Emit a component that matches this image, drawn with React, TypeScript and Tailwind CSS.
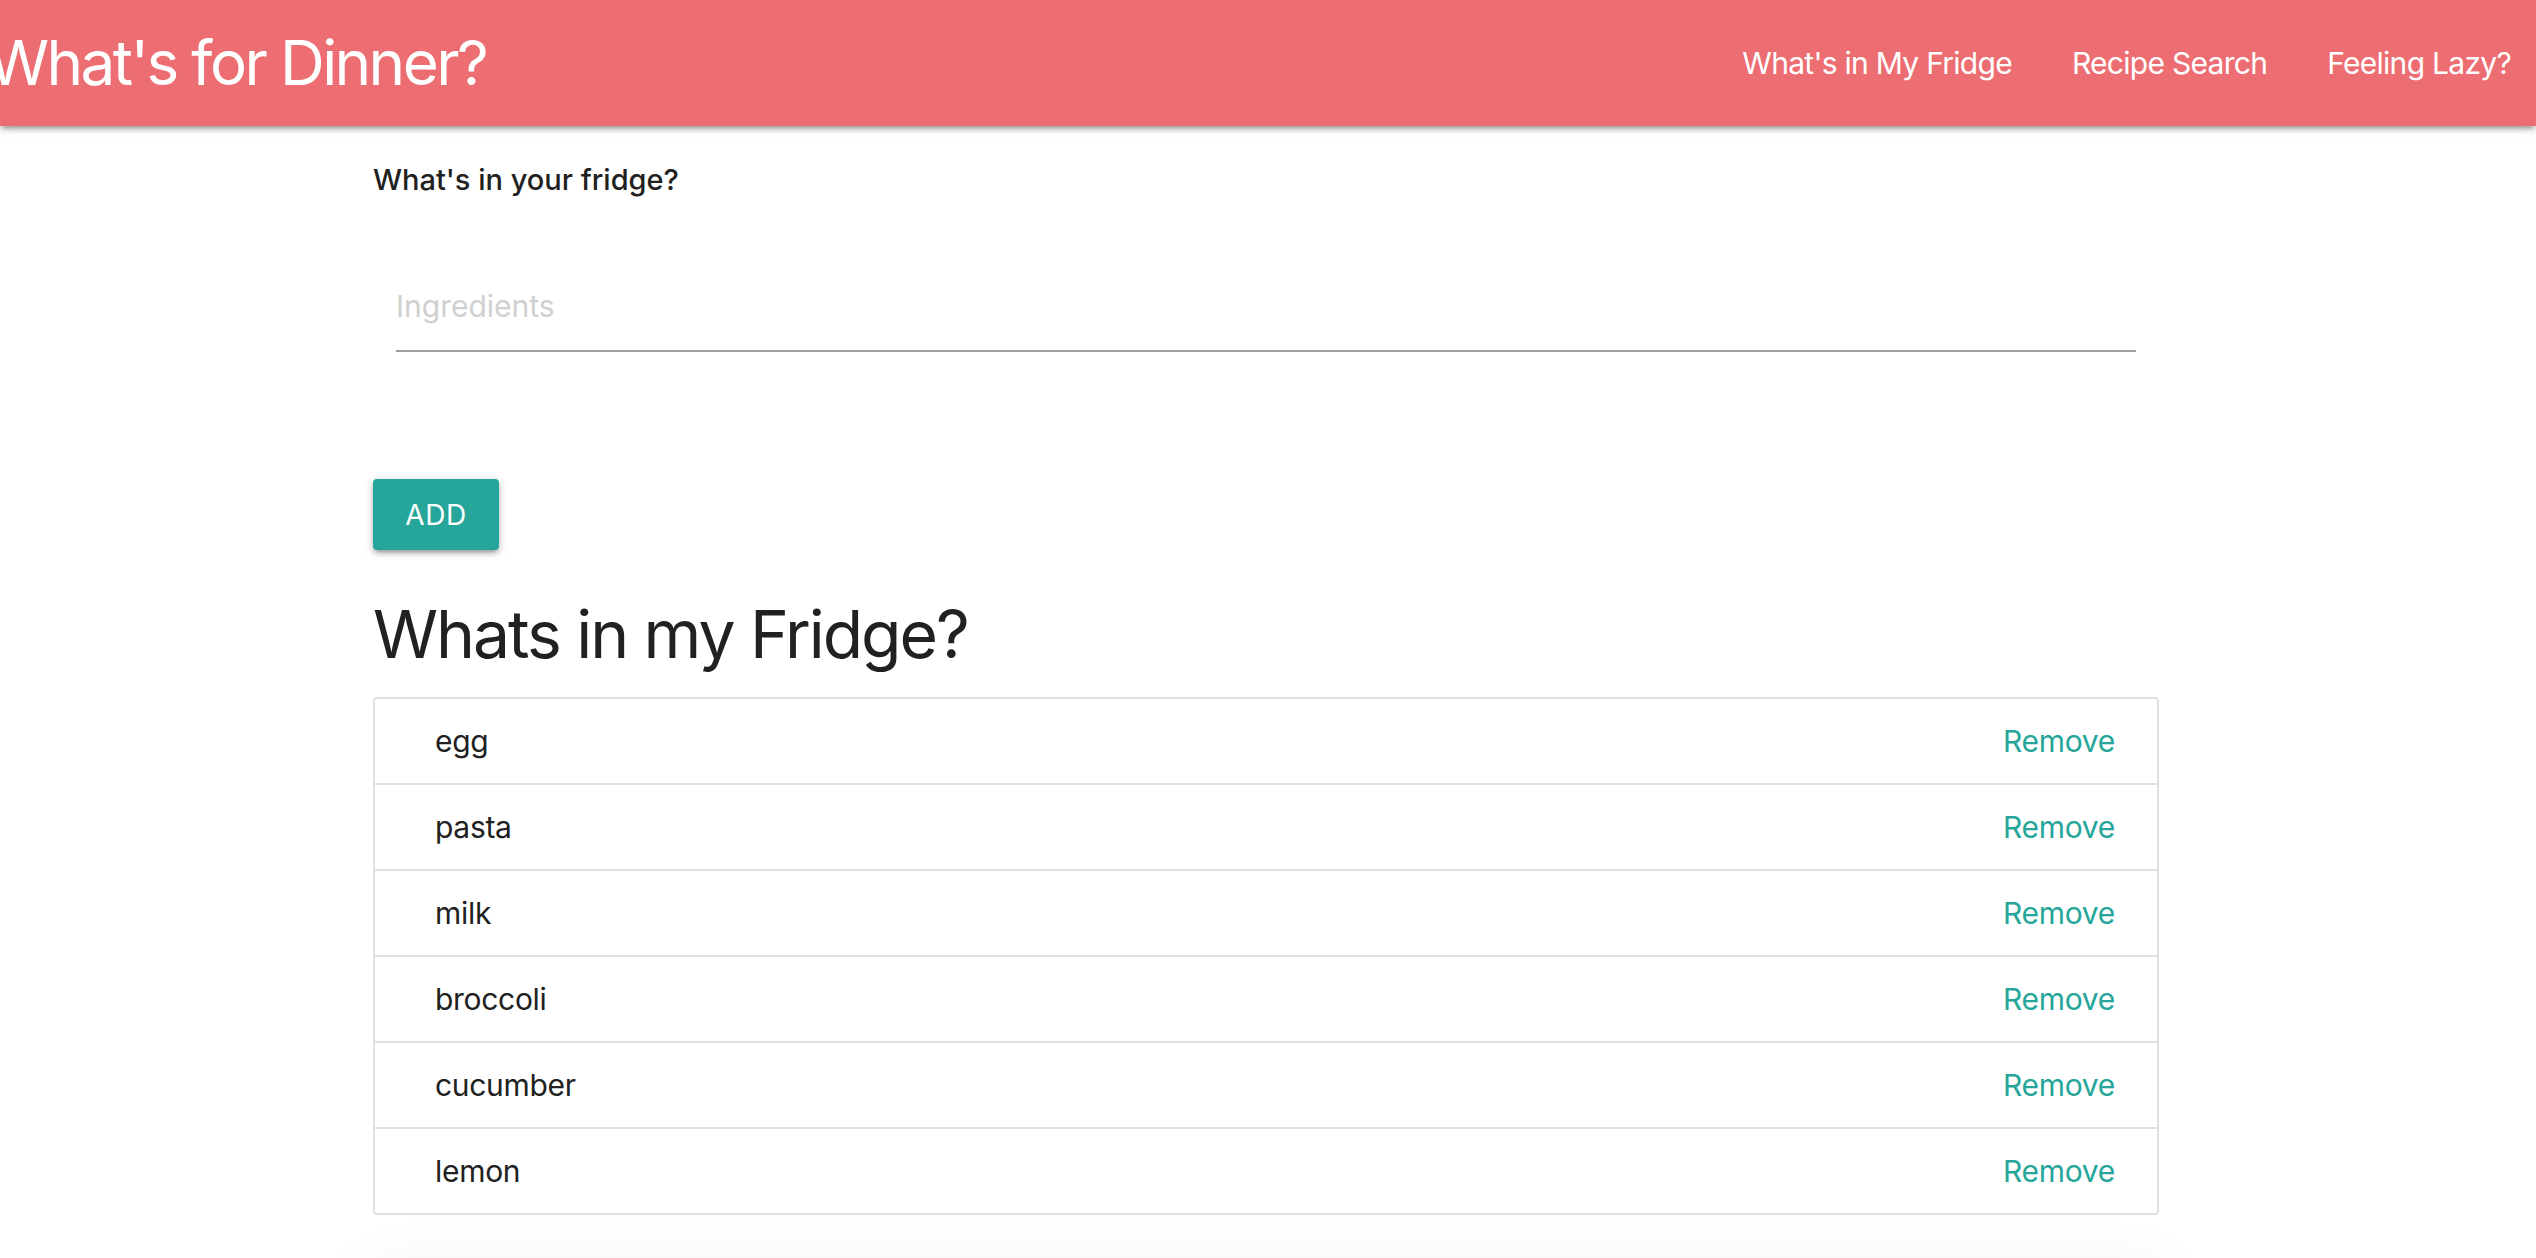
import { useState } from "react";

const font = "font-['Inter','Noto_Sans',sans-serif]";

function NavBar() {
  const links = ["What's in My Fridge", "Recipe Search", "Feeling Lazy?"];
  return (
    <nav className="h-[126px] bg-[#ec6e73] overflow-hidden shadow-[0_4px_4px_0_rgba(0,0,0,0.14),0_6px_2px_-4px_rgba(0,0,0,0.12),0_2px_10px_0_rgba(0,0,0,0.2)] relative z-10">
      <div className="h-full flex items-center">
        <a className="ml-[-12px] text-white text-[62px] leading-none tracking-[-0.042em] whitespace-nowrap">
          What's for Dinner?
        </a>
        <ul className="ml-auto mr-[-5px] flex items-center h-full">
          {links.map((l) => (
            <li key={l}>
              <a className="block px-[30px] text-white text-[30px] leading-none tracking-[-0.024em] whitespace-nowrap">
                {l}
              </a>
            </li>
          ))}
        </ul>
      </div>
    </nav>
  );
}

export default function App() {
  const [items, setItems] = useState([
    "egg",
    "pasta",
    "milk",
    "broccoli",
    "cucumber",
    "lemon",
  ]);
  const [value, setValue] = useState("");

  const handleAdd = () => {
    if (!value.trim()) return;
    setItems([...items, value.trim()]);
    setValue("");
  };

  return (
    <div className={`min-h-screen bg-white text-[#212121] overflow-hidden ${font}`}>
      <NavBar />

      <div className="ml-[373px] w-[1786px]">
        {/* форма */}
        <div className="mt-[31px] h-[45px] flex items-center text-[29px] font-medium">
          What's in your fridge?
        </div>

        <div className="mt-[60px] mx-[23px]">
          <input
            value={value}
            onChange={(e) => setValue(e.target.value)}
            placeholder="Ingredients"
            className="w-full h-[90px] border-b-2 border-[#9e9e9e] outline-none text-[30px] placeholder:text-[#d0d0d0] bg-transparent"
          />
        </div>

        <button
          onClick={handleAdd}
          className="mt-[127px] h-[71px] w-[126px] rounded-[4px] bg-[#26a69a] text-white text-[28px] tracking-[0.02em] flex items-center justify-center shadow-[0_4px_4px_0_rgba(0,0,0,0.14),0_6px_2px_-4px_rgba(0,0,0,0.12),0_2px_10px_0_rgba(0,0,0,0.2)]"
        >
          ADD
        </button>

        <h4 className="mt-[44px] h-[80px] flex items-center text-[66px] leading-none tracking-[-0.031em]">
          Whats in my Fridge?
        </h4>

        {/* список */}
        <ul className="mt-[23px] border-2 border-[#e0e0e0] rounded-[4px]">
          {items.map((item, i) => (
            <li
              key={item + i}
              className={`flex items-center justify-between pl-[60px] pr-[42px] text-[30px] tracking-[-0.01em] ${
                i < items.length - 1 ? "h-[86px] border-b-2 border-[#e0e0e0]" : "h-[84px]"
              }`}
            >
              <span>{item}</span>
              <a
                className="text-[#26a69a] cursor-pointer"
                onClick={() => setItems(items.filter((_, j) => j !== i))}
              >
                Remove
              </a>
            </li>
          ))}
        </ul>

        <div className="mt-[62px] h-[300px] rounded-[4px] bg-white shadow-[0_0_70px_rgba(0,0,0,0.08)]" />
      </div>
    </div>
  );
}
